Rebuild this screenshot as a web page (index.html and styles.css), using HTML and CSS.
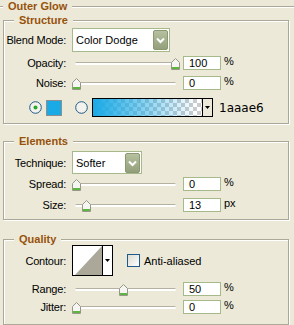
FILE: index.html
```html
<!DOCTYPE html>
<html lang="en">
<head>
  <meta charset="UTF-8">
  <title>Outer Glow</title>
  <link rel="stylesheet" href="styles.css">
</head>
<body>
  <fieldset class="group outer">
    <legend>Outer Glow</legend>

    <fieldset class="group sub structure">
      <legend>Structure</legend>
      <div class="row select-row">
        <span class="label">Blend Mode:</span>
        <div class="select select-wide">
          <span class="select-text">Color Dodge</span>
          <svg class="select-btn" width="15" height="20" viewBox="0 0 15 20">
            <defs><linearGradient id="btnA" x1="0" y1="0" x2="0" y2="1"><stop offset="0" stop-color="#b6c2a0"/><stop offset="1" stop-color="#939f7a"/></linearGradient></defs>
            <rect x="0.5" y="0.5" width="14" height="19" rx="1.5" fill="url(#btnA)" stroke="#8c9872"/>
            <polyline points="4,8.5 7.5,12 11,8.5" fill="none" stroke="#fff" stroke-width="2"/>
          </svg>
        </div>
      </div>
      <div class="row slider-row opacity-row">
        <span class="label">Opacity:</span>
        <div class="slider">
          <div class="track"></div>
          <svg class="thumb" style="left: 99px" width="9" height="12" viewBox="0 0 9 12"><path d="M4.5 0.5 L8.5 4.5 V11.5 H0.5 V4.5 Z" fill="#f5f5f1" stroke="#979789"/><rect x="1" y="9" width="7" height="2" fill="#5db63f"/></svg>
        </div>
        <div class="field">100</div>
        <span class="unit">%</span>
      </div>
      <div class="row slider-row noise-row">
        <span class="label">Noise:</span>
        <div class="slider">
          <div class="track"></div>
          <svg class="thumb" style="left: 0px" width="9" height="12" viewBox="0 0 9 12"><path d="M4.5 0.5 L8.5 4.5 V11.5 H0.5 V4.5 Z" fill="#f5f5f1" stroke="#979789"/><rect x="1" y="9" width="7" height="2" fill="#5db63f"/></svg>
        </div>
        <div class="field">0</div>
        <span class="unit">%</span>
      </div>
      <div class="row color-row">
        <svg class="radio" width="13" height="13" viewBox="0 0 13 13"><circle cx="6.5" cy="6.5" r="5.8" fill="#f3f2ec" stroke="#1f5a8a"/><circle cx="6.5" cy="6.5" r="2" fill="#27a627"/></svg>
        <span class="swatch"></span>
        <svg class="radio radio-two" width="13" height="13" viewBox="0 0 13 13"><circle cx="6.5" cy="6.5" r="5.8" fill="#f3f2ec" stroke="#1f5a8a"/></svg>
        <div class="gradient">
          <span class="gradient-fill"></span>
          <span class="gradient-arrow"><svg width="5" height="3" viewBox="0 0 5 3"><path d="M0 0 H5 L2.5 3 Z" fill="#000"/></svg></span>
        </div>
        <span class="hex">1aaae6</span>
      </div>
    </fieldset>

    <fieldset class="group sub elements">
      <legend>Elements</legend>
      <div class="row select-row">
        <span class="label">Technique:</span>
        <div class="select select-narrow">
          <span class="select-text">Softer</span>
          <svg class="select-btn" width="15" height="20" viewBox="0 0 15 20">
            <defs><linearGradient id="btnB" x1="0" y1="0" x2="0" y2="1"><stop offset="0" stop-color="#b6c2a0"/><stop offset="1" stop-color="#939f7a"/></linearGradient></defs>
            <rect x="0.5" y="0.5" width="14" height="19" rx="1.5" fill="url(#btnB)" stroke="#8c9872"/>
            <polyline points="4,8.5 7.5,12 11,8.5" fill="none" stroke="#fff" stroke-width="2"/>
          </svg>
        </div>
      </div>
      <div class="row slider-row spread-row">
        <span class="label">Spread:</span>
        <div class="slider">
          <div class="track"></div>
          <svg class="thumb" style="left: 0px" width="9" height="12" viewBox="0 0 9 12"><path d="M4.5 0.5 L8.5 4.5 V11.5 H0.5 V4.5 Z" fill="#f5f5f1" stroke="#979789"/><rect x="1" y="9" width="7" height="2" fill="#5db63f"/></svg>
        </div>
        <div class="field">0</div>
        <span class="unit">%</span>
      </div>
      <div class="row slider-row size-row">
        <span class="label">Size:</span>
        <div class="slider">
          <div class="track"></div>
          <svg class="thumb" style="left: 10px" width="9" height="12" viewBox="0 0 9 12"><path d="M4.5 0.5 L8.5 4.5 V11.5 H0.5 V4.5 Z" fill="#f5f5f1" stroke="#979789"/><rect x="1" y="9" width="7" height="2" fill="#5db63f"/></svg>
        </div>
        <div class="field">13</div>
        <span class="unit">px</span>
      </div>
    </fieldset>

    <fieldset class="group sub quality">
      <legend>Quality</legend>
      <div class="row contour-row">
        <span class="label">Contour:</span>
        <div class="contour">
          <svg class="contour-preview" width="29" height="29" viewBox="0 0 29 29"><rect width="29" height="29" fill="#fff"/><polygon points="2,29 29,0 29,29" fill="#aba799"/></svg>
          <span class="contour-arrow"><svg width="5" height="3" viewBox="0 0 5 3"><path d="M0 0 H5 L2.5 3 Z" fill="#000"/></svg></span>
        </div>
        <span class="check"></span>
        <span class="check-label">Anti-aliased</span>
      </div>
      <div class="row slider-row range-row">
        <span class="label">Range:</span>
        <div class="slider">
          <div class="track"></div>
          <svg class="thumb" style="left: 47px" width="9" height="12" viewBox="0 0 9 12"><path d="M4.5 0.5 L8.5 4.5 V11.5 H0.5 V4.5 Z" fill="#f5f5f1" stroke="#979789"/><rect x="1" y="9" width="7" height="2" fill="#5db63f"/></svg>
        </div>
        <div class="field">50</div>
        <span class="unit">%</span>
      </div>
      <div class="row slider-row jitter-row">
        <span class="label">Jitter:</span>
        <div class="slider">
          <div class="track"></div>
          <svg class="thumb" style="left: 0px" width="9" height="12" viewBox="0 0 9 12"><path d="M4.5 0.5 L8.5 4.5 V11.5 H0.5 V4.5 Z" fill="#f5f5f1" stroke="#979789"/><rect x="1" y="9" width="7" height="2" fill="#5db63f"/></svg>
        </div>
        <div class="field">0</div>
        <span class="unit">%</span>
      </div>
    </fieldset>
  </fieldset>
</body>
</html>
```

FILE: styles.css
```css
body {
  margin: 0;
  background: #ece9d8;
  font-family: "Liberation Sans", Arial, sans-serif;
  font-size: 11px;
  line-height: 12px;
  color: #000;
  overflow: hidden;
}
.group {
  margin: 0;
  min-width: 0;
  border: 1px solid #aca899;
  box-shadow: 1px 1px 0 #fff, inset 1px 1px 0 #fff;
}
.group > legend {
  padding: 0 5px;
  font-weight: bold;
  line-height: 12px;
  color: #97520c;
  background: #ece9d8;
}
.outer {
  border-width: 1px 0 0 0;
  box-shadow: inset 0 1px 0 #fff;
  padding: 2px 0 0 3px;
}
.sub {
  width: 286px;
  box-sizing: border-box;
  padding: 0 0 6px 10px;
}
.elements {
  margin-top: 11px;
  padding-bottom: 7px;
}
.quality {
  margin-top: 13px;
  padding-bottom: 10px;
}
.row {
  display: flex;
  align-items: center;
}
.label {
  flex: none;
  display: flex;
  justify-content: flex-end;
  width: 52px;
  margin-right: 6px;
  white-space: nowrap;
  letter-spacing: -0.2px;
}
.structure .select-row {
  margin-top: 2px;
}
.elements .select-row {
  margin-top: 4px;
}
.select {
  display: flex;
  align-items: center;
  box-sizing: border-box;
  height: 24px;
  padding: 0 1px 0 3px;
  border: 1px solid #a5b98a;
  background: #fff;
}
.select-wide {
  width: 98px;
}
.select-narrow {
  width: 70px;
  height: 23px;
}
.select-text {
  flex: 1;
  font-size: 11px;
}
.select-btn {
  display: block;
}
.slider-row {
  height: 14px;
  align-items: stretch;
}
.opacity-row { margin-top: 4px; }
.noise-row { margin-top: 6px; }
.spread-row { margin-top: 3px; }
.size-row { margin-top: 7px; }
.range-row { margin-top: 6px; }
.jitter-row { margin-top: 4px; }
.slider-row .label {
  align-self: center;
}
.slider {
  position: relative;
  width: 108px;
  margin-right: 3px;
}
.track {
  position: absolute;
  left: 3px;
  right: 4px;
  top: 6px;
  height: 3px;
  box-sizing: border-box;
  border-top: 1px solid #b4b1a3;
  border-radius: 2px;
  background: #fff;
}
.thumb {
  position: absolute;
  top: 2px;
}
.field {
  box-sizing: border-box;
  width: 38px;
  height: 14px;
  padding-left: 5px;
  border: 1px solid #a5b98a;
  background: #fff;
  line-height: 12px;
}
.unit {
  margin-left: 3px;
  align-self: flex-start;
  line-height: 10px;
}
.color-row {
  margin-top: 8px;
  height: 19px;
  padding-left: 15px;
}
.radio {
  display: block;
}
.swatch {
  width: 16px;
  height: 16px;
  margin-left: 4px;
  box-sizing: border-box;
  border: 1px solid #8e8e8e;
  background: #1aaae6;
}
.radio-two {
  margin-left: 13px;
}
.gradient {
  display: flex;
  width: 121px;
  height: 19px;
  margin-left: 4px;
  box-sizing: border-box;
  border: 1px solid #000;
}
.gradient-fill {
  flex: 1;
  background:
    linear-gradient(90deg, #1aaae6 0%, rgba(26, 170, 230, 0.55) 45%, rgba(26, 170, 230, 0) 95%),
    repeating-conic-gradient(#cccccc 0 25%, #ffffff 0 50%) 0 0 / 8px 8px;
}
.gradient-arrow {
  display: flex;
  align-items: center;
  justify-content: center;
  width: 9px;
  border-left: 1px solid #000;
  background: #ece9d8;
}
.gradient-arrow svg,
.contour-arrow svg {
  display: block;
}
.hex {
  margin-left: 6px;
  font-family: "DejaVu Sans", sans-serif;
  font-size: 12px;
}
.contour-row {
  height: 31px;
}
.contour {
  display: flex;
  width: 41px;
  height: 31px;
  box-sizing: border-box;
  border: 1px solid #000;
  background: #fff;
}
.contour-preview {
  display: block;
  flex: none;
}
.contour-arrow {
  display: flex;
  align-items: center;
  justify-content: center;
  flex: 1;
  border-left: 1px solid #000;
}
.check {
  width: 13px;
  height: 13px;
  margin-left: 14px;
  box-sizing: border-box;
  border: 1px solid #1f5a8a;
  background: linear-gradient(135deg, #dcdbd3, #ffffff);
}
.check-label {
  margin-left: 4px;
}
```
